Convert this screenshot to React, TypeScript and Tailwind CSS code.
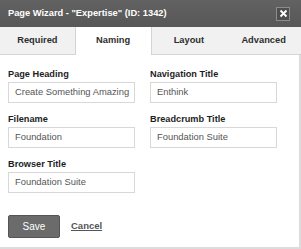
import React from 'react'

// ── Field ─────────────────────────────────────────────────────────────────────

function Field({ label, value }: { label: string; value: string }) {
  return (
    <div className="flex flex-col">
      <label className="text-[9.2px] font-bold text-[#1e1e1e] leading-[11px] mb-[2px]">{label}</label>
      <div className="w-[127px] h-[21px] border border-[#d8d8d8] bg-white pl-[6px] flex items-center text-[9.4px] text-[#555] whitespace-nowrap overflow-hidden">
        {value}
      </div>
    </div>
  )
}

const tabs = ['Required', 'Naming', 'Layout', 'Advanced']

export default function App() {
  return (
    <div
      className="w-[301px] h-[249px] bg-white flex flex-col overflow-hidden"
      style={{ fontFamily: '"Liberation Sans", Arial, sans-serif' }}
    >
      {/* Title bar */}
      <div className="h-[27px] bg-gradient-to-b from-[#626262] to-[#575757] flex items-center pl-[8px] pr-[11px]">
        <span className="text-white text-[9.3px] font-bold">Page Wizard - "Expertise" (ID: 1342)</span>
        <div className="ml-auto w-[14px] h-[14px] border border-[#8c8c8c] bg-[#4e4e4e] flex items-center justify-center">
          <svg width="9" height="9" viewBox="0 0 9 9">
            <path d="M1.5 1.5 L7.5 7.5 M7.5 1.5 L1.5 7.5" stroke="#fff" strokeWidth="1.8" />
          </svg>
        </div>
      </div>

      {/* Tabs */}
      <div className="flex h-[28px]">
        {tabs.map((t) => {
          const active = t === 'Naming'
          return (
            <div
              key={t}
              className={`flex-1 flex items-center justify-center text-[9.3px] font-bold text-[#2e2e2e] ${
                active ? 'bg-white border-l border-r border-[#d4d4d4]' : 'bg-[#f1f1f1] border-b border-[#d4d4d4]'
              }`}
            >
              {t}
            </div>
          )
        })}
      </div>

      {/* Body */}
      <div className="flex-1 border-r-2 border-b-2 border-[#dcdcdc] pl-[8px] pt-[14px] flex flex-col">
        <div className="grid grid-cols-[142px_1fr] gap-y-[11px]">
          <Field label="Page Heading" value="Create Something Amazing" />
          <Field label="Navigation Title" value="Enthink" />
          <Field label="Filename" value="Foundation" />
          <Field label="Breadcrumb Title" value="Foundation Suite" />
          <Field label="Browser Title" value="Foundation Suite" />
        </div>

        <div className="flex items-center gap-[11px] mt-[22px]">
          <button className="w-[52px] h-[23px] bg-[#6b6b6b] border border-[#555] rounded-[2px] text-white text-[10px]">
            Save
          </button>
          <a className="text-[9.5px] font-bold text-[#555] underline">Cancel</a>
        </div>
      </div>
    </div>
  )
}
